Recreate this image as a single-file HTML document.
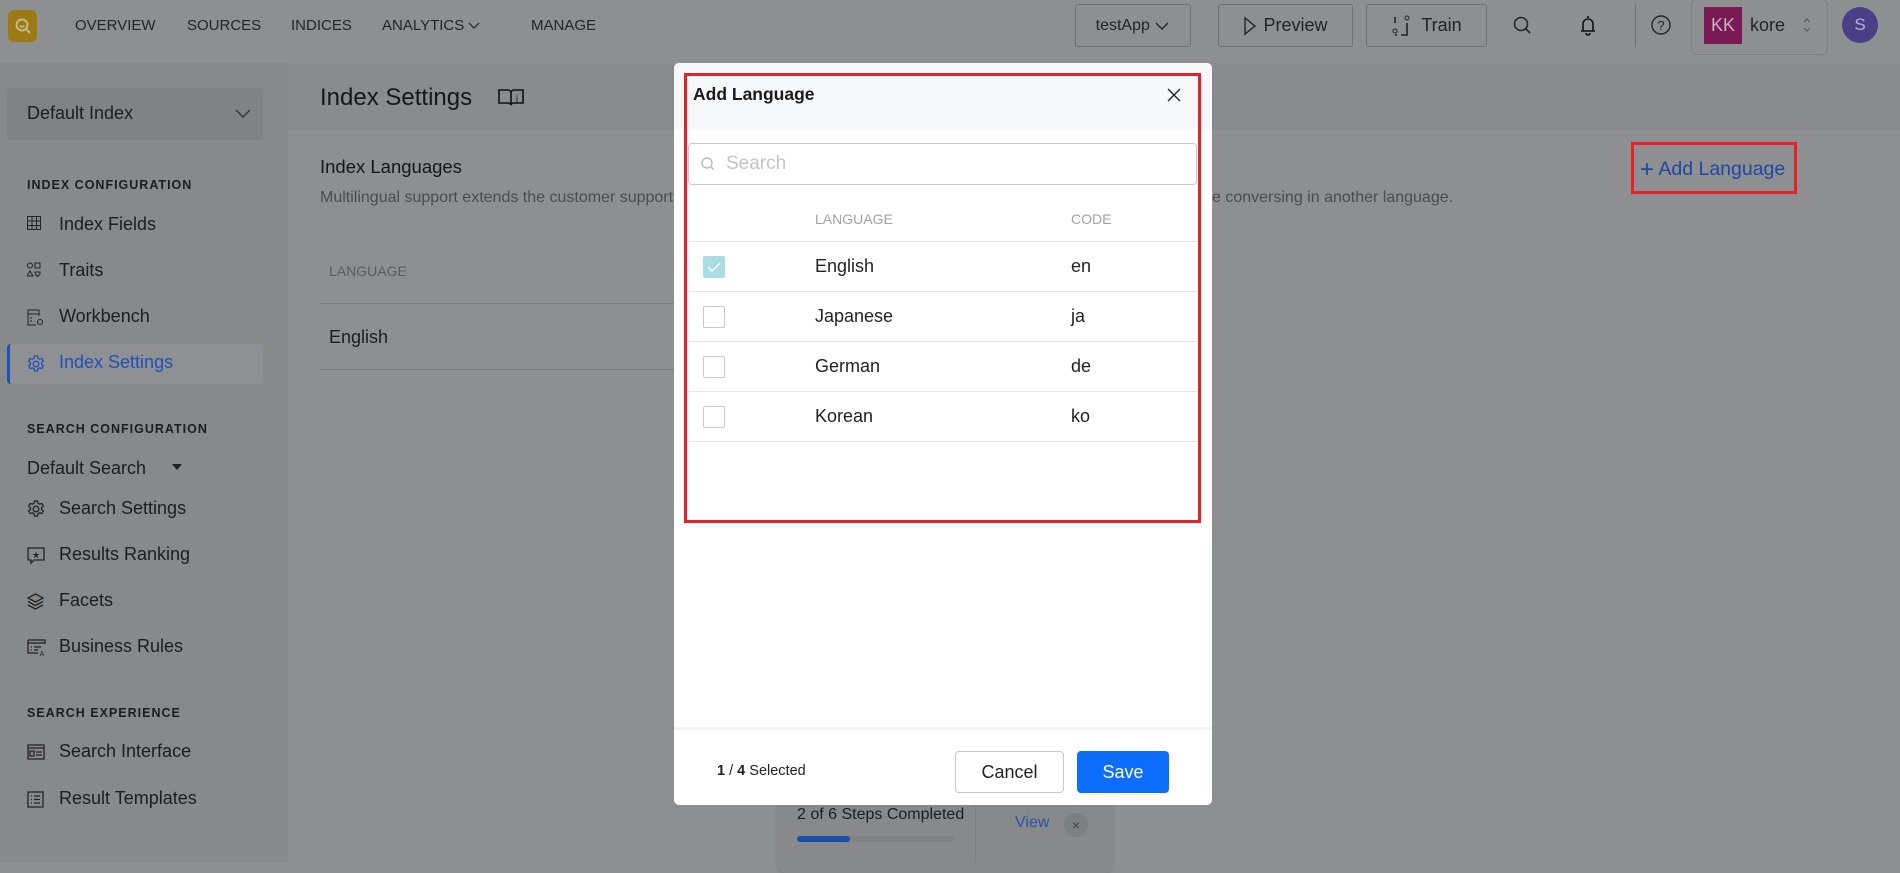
<!DOCTYPE html>
<html><head><meta charset="utf-8"><style>
*{box-sizing:border-box;margin:0;padding:0}
body{width:1900px;height:862px;overflow:hidden;background:#8e8f91;font-family:"Liberation Sans",sans-serif;color:#1c1d1f;position:relative}
.a{position:absolute;white-space:nowrap}
.hdr{left:0;top:0;width:1900px;height:63px;background:#8e8f91;box-shadow:0 2px 4px rgba(0,0,0,.12)}
.nav{font-size:15px;color:#232426;top:17px}
.btn{border:1px solid #6f7072;border-radius:3px;height:43px;top:4px;font-size:18px;color:#232426;display:flex;align-items:center;justify-content:center}
.side{left:0;top:63px;width:288px;height:799px;background:#88898b}
.lbl{font-size:12.5px;font-weight:bold;letter-spacing:1px;left:27px;color:#1c1d1f}
.it{font-size:18px;left:59px;color:#1c1d1f}
.ic{left:27px}
.modal{left:674px;top:63px;width:538px;height:742px;background:#fff;border-radius:5px}
.row{left:688px;width:509px;height:50px;border-bottom:1px solid #e4e5e8}
.cb{position:absolute;left:15px;top:14px;width:22px;height:22px;border:1px solid #c5c7cc;border-radius:2px;background:#fff}
.rt{position:absolute;top:14px;font-size:18px;color:#222}
</style></head><body>
<div class="a hdr"></div>
<div class="a" style="left:8px;top:10px;width:29px;height:32px;background:#9c7a14;border-radius:6px"></div>
<svg class="a" style="left:13px;top:16px" width="20" height="20" viewBox="0 0 20 20"><circle cx="9" cy="9" r="5.5" fill="none" stroke="#c8b888" stroke-width="2"/><path d="M13 13l4 4" stroke="#c8b888" stroke-width="2"/><path d="M7 9a2 2 0 0 0 4 0" stroke="#c8b888" stroke-width="1.5" fill="none"/></svg>
<div class="a nav" style="left:75px">OVERVIEW</div>
<div class="a nav" style="left:187px">SOURCES</div>
<div class="a nav" style="left:291px">INDICES</div>
<div class="a nav" style="left:382px">ANALYTICS <svg width="12" height="8"><path d="M1 1l5 5 5-5" stroke="#232426" fill="none" stroke-width="1.2"/></svg></div>
<div class="a nav" style="left:531px">MANAGE</div>
<div class="a btn" style="left:1075px;width:116px;font-size:16px">testApp&nbsp;<svg width="16" height="10"><path d="M2 2l6 6 6-6" stroke="#232426" fill="none" stroke-width="1.4"/></svg></div>
<div class="a btn" style="left:1218px;width:135px"><svg width="14" height="20" style="margin-right:6px"><path d="M2 2l10 8-10 8z" stroke="#232426" fill="none" stroke-width="1.4"/></svg>Preview</div>
<div class="a btn" style="left:1366px;width:121px"><svg width="20" height="22" style="margin-right:10px"><path d="M4 2v6M4 12v0M16 4v0M16 8v12h-6M4 20h2" stroke="#232426" fill="none" stroke-width="1.6"/><circle cx="4" cy="16" r="2" stroke="#232426" fill="none"/><circle cx="16" cy="3" r="2" stroke="#232426" fill="none"/></svg>Train</div>
<svg class="a" style="left:1512px;top:15px" width="20" height="20"><circle cx="9" cy="9" r="6.5" stroke="#232426" fill="none" stroke-width="1.6"/><path d="M14 14l4 4" stroke="#232426" stroke-width="1.6"/></svg>
<svg class="a" style="left:1580px;top:14px" width="16" height="22"><path d="M8 2v2M3 17V10a5 5 0 0 1 10 0v7zM1 17h14M6 19a2 2 0 0 0 4 0" stroke="#111" fill="none" stroke-width="1.6"/></svg>
<div class="a" style="left:1635px;top:4px;width:1px;height:43px;background:#6f7072"></div>
<svg class="a" style="left:1650px;top:14px" width="22" height="22"><circle cx="11" cy="11" r="9" stroke="#232426" fill="none" stroke-width="1.4"/><text x="11" y="16" font-size="13" text-anchor="middle" fill="#232426" font-family="Liberation Sans">?</text></svg>
<div class="a" style="left:1691px;top:-1px;width:137px;height:56px;border:1px solid #7e7f81;border-radius:6px"></div>
<div class="a" style="left:1704px;top:7px;width:38px;height:37px;background:#7a1a55;color:#c9b0bf;font-size:18px;text-align:center;line-height:37px">KK</div>
<div class="a" style="left:1750px;top:15px;font-size:18px;color:#232426">kore</div>
<svg class="a" style="left:1802px;top:17px" width="10" height="16"><path d="M2 5l3-3 3 3M2 11l3 3 3-3" stroke="#555" fill="none" stroke-width="1"/></svg>
<div class="a" style="left:1842px;top:7px;width:36px;height:36px;border-radius:50%;background:#4a3f86;color:#b8b2d0;font-size:17px;text-align:center;line-height:36px">S</div>

<div class="a side"></div>
<div class="a" style="left:7px;top:88px;width:256px;height:52px;background:#818284;border-radius:4px"></div>
<div class="a" style="left:27px;top:103px;font-size:18px">Default Index</div>
<svg class="a" style="left:234px;top:108px" width="18" height="12"><path d="M2 2l7 7 7-7" stroke="#333" fill="none" stroke-width="1.4"/></svg>
<div class="a lbl" style="top:178px">INDEX CONFIGURATION</div>
<svg class="a ic" style="top:216px" width="14" height="14"><path d="M.5 .5h13v13H.5zM.5 5h13M.5 9.5h13M5 .5v13M9.5 .5v13" stroke="#222" fill="none"/></svg>
<div class="a it" style="top:214px">Index Fields</div>
<svg class="a ic" style="top:262px" width="14" height="16"><circle cx="3" cy="3.5" r="2.5" stroke="#222" fill="none"/><rect x="8" y="1" width="5" height="5" stroke="#222" fill="none"/><path d="M3 9l3 5H0z" stroke="#222" fill="none"/><path d="M8 10h5v2l-2.5 2.5L8 12z" stroke="#222" fill="none"/></svg>
<div class="a it" style="top:260px">Traits</div>
<svg class="a ic" style="top:309px" width="17" height="17"><path d="M12 7V1H1v15h8M1 5h11M3 9h2M3 12h2" stroke="#222" fill="none"/><circle cx="13" cy="13" r="2.5" stroke="#222" fill="none"/></svg>
<div class="a it" style="top:306px">Workbench</div>
<div class="a" style="left:7px;top:344px;width:256px;height:40px;background:#8f9093;border-radius:4px;border-left:3px solid #1d4fbd"></div>
<svg class="a ic" style="top:355px" width="18" height="18" viewBox="0 0 18 18"><circle cx="9" cy="9" r="2.8" stroke="#2453b8" fill="none" stroke-width="1.3"/><path d="M7.5 1h3l.5 2.3 1.6.9 2.2-.8 1.5 2.6-1.7 1.6v1.8l1.7 1.6-1.5 2.6-2.2-.8-1.6.9-.5 2.3h-3l-.5-2.3-1.6-.9-2.2.8-1.5-2.6 1.7-1.6V7.6L1.7 6l1.5-2.6 2.2.8L7 3.3z" stroke="#2453b8" fill="none" stroke-width="1.3"/></svg>
<div class="a it" style="top:352px;color:#2150b6">Index Settings</div>
<div class="a lbl" style="top:422px">SEARCH CONFIGURATION</div>
<div class="a it" style="top:458px;left:27px">Default Search</div>
<div class="a" style="left:172px;top:464px;border:5px solid transparent;border-top:6px solid #222"></div>
<svg class="a ic" style="top:500px" width="18" height="18" viewBox="0 0 18 18"><circle cx="9" cy="9" r="2.8" stroke="#222" fill="none" stroke-width="1.3"/><path d="M7.5 1h3l.5 2.3 1.6.9 2.2-.8 1.5 2.6-1.7 1.6v1.8l1.7 1.6-1.5 2.6-2.2-.8-1.6.9-.5 2.3h-3l-.5-2.3-1.6-.9-2.2.8-1.5-2.6 1.7-1.6V7.6L1.7 6l1.5-2.6 2.2.8L7 3.3z" stroke="#222" fill="none" stroke-width="1.3"/></svg>
<div class="a it" style="top:498px">Search Settings</div>
<svg class="a ic" style="top:547px" width="18" height="18"><path d="M1 1h16v12H7l-3 3v-3H1z" stroke="#222" fill="none" stroke-width="1.3"/><text x="9" y="11" font-size="9" text-anchor="middle" fill="#222">★</text></svg>
<div class="a it" style="top:544px">Results Ranking</div>
<svg class="a ic" style="top:593px" width="17" height="17"><path d="M8.5 1L16 5l-7.5 4L1 5zM1 8.5l7.5 4 7.5-4M1 12l7.5 4 7.5-4" stroke="#222" fill="none" stroke-width="1.3"/></svg>
<div class="a it" style="top:590px">Facets</div>
<svg class="a ic" style="top:639px" width="19" height="17"><path d="M1 1h17v4M1 1v13h10M1 4h17M4 8h1M7 8h7M4 11h1M7 11h4" stroke="#222" fill="none" stroke-width="1.3"/><text x="15" y="17" font-size="7" text-anchor="middle" fill="#222">A</text></svg>
<div class="a it" style="top:636px">Business Rules</div>
<div class="a lbl" style="top:706px">SEARCH EXPERIENCE</div>
<svg class="a ic" style="top:744px" width="18" height="16"><path d="M1 1h16v14H1zM1 4h16M3 7h4v5H3zM9 8h6M9 11h6" stroke="#222" fill="none" stroke-width="1.3"/></svg>
<div class="a it" style="top:741px">Search Interface</div>
<svg class="a ic" style="top:791px" width="17" height="17"><path d="M1 1h15v15H1zM4 5h1M7 5h6M4 8.5h1M7 8.5h6M4 12h1M7 12h6" stroke="#222" fill="none" stroke-width="1.3"/></svg>
<div class="a it" style="top:788px">Result Templates</div>

<div class="a" style="left:288px;top:63px;width:1612px;height:68px;background:#898b8e"></div>
<div class="a" style="left:320px;top:84px;font-size:24px;color:#151618">Index Settings</div>
<svg class="a" style="left:498px;top:87px" width="26" height="20"><path d="M1 3h9a3 3 0 0 1 3 3v12a3 3 0 0 0-3-2H1zM25 3h-9a3 3 0 0 0-3 3v12a3 3 0 0 1 3-2h9z" stroke="#111" fill="none" stroke-width="1.6"/><text x="19" y="15" font-size="10" text-anchor="middle" fill="#111">i</text></svg>
<div class="a" style="left:320px;top:156px;font-size:18.5px;color:#151618">Index Languages</div>
<div class="a" style="left:320px;top:189px;font-size:16px;color:#4a4c50">Multilingual support extends the customer support</div>
<div class="a" style="left:1212px;top:189px;font-size:16px;color:#4a4c50">e conversing in another language.</div>
<div class="a" style="left:329px;top:263px;font-size:14px;color:#5a5c60">LANGUAGE</div>
<div class="a" style="left:320px;top:303px;width:360px;height:1px;background:#7c7d80"></div>
<div class="a" style="left:329px;top:327px;font-size:18px;color:#1c1d1f">English</div>
<div class="a" style="left:320px;top:369px;width:360px;height:1px;background:#7c7d80"></div>
<div class="a" style="left:1631px;top:142px;width:166px;height:52px;border:3px solid #e8202a"></div>
<div class="a" style="left:1640px;top:154px;font-size:19.5px;color:#1d47a6"><span style="font-size:24px;position:relative;top:2px">+</span> Add Language</div>

<div class="a" style="left:778px;top:793px;width:334px;height:80px;background:#88898b;border-radius:8px;box-shadow:0 1px 4px rgba(0,0,0,.15)"></div>
<div class="a" style="left:797px;top:806px;font-size:16px;color:#1c1d1f">2 of 6 Steps Completed</div>
<div class="a" style="left:797px;top:836px;width:158px;height:6px;background:#7f8184;border-radius:3px"></div>
<div class="a" style="left:797px;top:836px;width:53px;height:6px;background:#1b4fa3;border-radius:3px"></div>
<div class="a" style="left:975px;top:793px;width:1px;height:69px;background:#7e7f81"></div>
<div class="a" style="left:1015px;top:814px;font-size:16px;color:#2456ac">View</div>
<div class="a" style="left:1064px;top:813px;width:24px;height:24px;border-radius:50%;background:#7e7f81;color:#444;font-size:14px;text-align:center;line-height:24px">×</div>

<div class="a modal"></div>
<div class="a" style="left:674px;top:63px;width:538px;height:64px;background:#f7f8fa;border-radius:5px 5px 0 0;box-shadow:0 2px 3px rgba(0,0,0,.04)"></div>
<div class="a" style="left:693px;top:84px;font-size:17.5px;font-weight:bold;color:#1a1a1a">Add Language</div>
<svg class="a" style="left:1167px;top:88px" width="14" height="14"><path d="M1 1l12 12M13 1L1 13" stroke="#222" stroke-width="1.4"/></svg>
<div class="a" style="left:688px;top:143px;width:509px;height:42px;border:1px solid #c6c8cc;border-radius:4px"></div>
<svg class="a" style="left:700px;top:156px" width="16" height="16"><circle cx="7" cy="7" r="5" stroke="#b8bbc0" fill="none" stroke-width="1.4"/><path d="M11 11l3 3" stroke="#b8bbc0" stroke-width="1.4"/></svg>
<div class="a" style="left:726px;top:153px;font-size:19px;color:#c2c4c8">Search</div>
<div class="a" style="left:815px;top:211px;font-size:14px;color:#a0a3a8">LANGUAGE</div>
<div class="a" style="left:1071px;top:211px;font-size:14px;color:#a0a3a8">CODE</div>
<div class="a" style="left:688px;top:241px;width:509px;height:1px;background:#e4e5e8"></div>
<div class="a row" style="top:242px"><div class="cb" style="background:#a9dde3;border-color:#a9dde3"><svg width="22" height="22" style="position:absolute;left:-1px;top:-1px"><path d="M5 11l4 4 8-8" stroke="#fff" fill="none" stroke-width="1.5"/></svg></div><div class="rt" style="left:127px">English</div><div class="rt" style="left:383px">en</div></div>
<div class="a row" style="top:292px"><div class="cb"></div><div class="rt" style="left:127px">Japanese</div><div class="rt" style="left:383px">ja</div></div>
<div class="a row" style="top:342px"><div class="cb"></div><div class="rt" style="left:127px">German</div><div class="rt" style="left:383px">de</div></div>
<div class="a row" style="top:392px"><div class="cb"></div><div class="rt" style="left:127px">Korean</div><div class="rt" style="left:383px">ko</div></div>
<div class="a" style="left:684px;top:73px;width:517px;height:450px;border:3px solid #e8202a"></div>
<div class="a" style="left:674px;top:727px;width:538px;height:3px;background:#f3f4f6"></div>
<div class="a" style="left:717px;top:763px;font-size:14.5px;color:#222"><b>1</b> / <b>4</b> Selected</div>
<div class="a" style="left:955px;top:751px;width:109px;height:42px;border:1px solid #c4c6ca;border-radius:4px;font-size:18px;color:#222;text-align:center;line-height:40px">Cancel</div>
<div class="a" style="left:1077px;top:751px;width:92px;height:42px;background:#0d6efd;border-radius:4px;font-size:18px;color:#fff;text-align:center;line-height:42px">Save</div>
</body></html>
